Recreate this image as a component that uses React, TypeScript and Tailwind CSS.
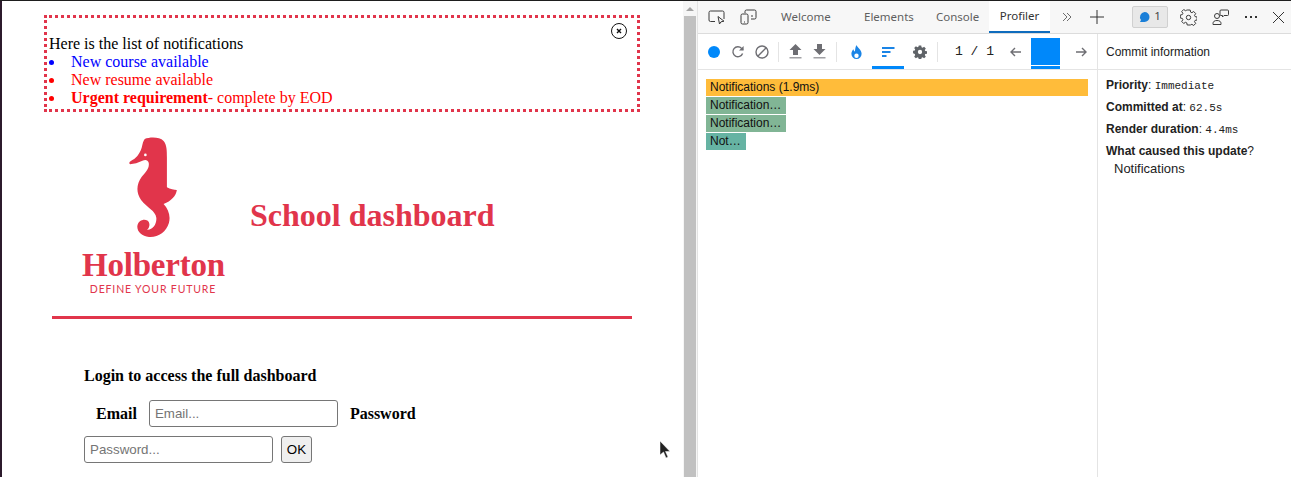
const Seahorse = () => (
  <svg width="50" height="101" viewBox="205 18 150 305" className="block">
    <path
      fill="#e1354b"
      d="M255 24 C270 18 300 17 312 30 C322 42 322 60 322 80 L322 170 C332 176 344 178 352 178 C350 195 335 212 312 220 C326 235 334 255 328 278 C320 305 295 322 268 320 C245 318 230 302 233 285 C236 270 252 264 263 270 C271 275 272 290 262 298 C278 300 292 282 290 262 C288 240 262 232 244 208 C228 186 230 160 246 138 C258 124 270 112 267 96 C264 86 256 86 248 90 C236 96 222 100 211 100 C207 98 208 93 212 91 C228 84 240 70 246 50 C249 38 250 30 255 24 Z"
    />
    <circle cx="257" cy="72" r="4" fill="#fff" />
  </svg>
)

const InspectIcon = () => (
  <svg width="17" height="15" viewBox="0 0 17 15" fill="none" stroke="#3b3b3b" strokeWidth="1">
    <path d="M7 11.5H2.5a1.5 1.5 0 0 1-1.5-1.5V2.5A1.5 1.5 0 0 1 2.5 1h12A1.5 1.5 0 0 1 16 2.5V9" />
    <path d="M10 6.5l1.5 7.5 1.5-2.2 3-.6z" />
  </svg>
)

const DeviceIcon = () => (
  <svg width="17" height="16" viewBox="0 0 17 16" fill="none" stroke="#3b3b3b" strokeWidth="1">
    <path d="M5 4V2.5A1.5 1.5 0 0 1 6.5 1h8A1.5 1.5 0 0 1 16 2.5v6a1.5 1.5 0 0 1-1.5 1.5H11" />
    <rect x="1" y="5" width="7" height="10" rx="1.5" />
    <path d="M4 13h1M11 7h2" />
  </svg>
)

const ReloadIcon = () => (
  <svg width="14" height="14" viewBox="0 0 14 14" fill="none" stroke="#6e6e73" strokeWidth="1.4">
    <path d="M11.6 8.5A5 5 0 1 1 10.6 3.4L12 4.8" />
    <path d="M12.6 1v4.6H8z" fill="#6e6e73" stroke="none" />
  </svg>
)

const BlockIcon = () => (
  <svg width="14" height="14" viewBox="0 0 14 14" fill="none" stroke="#6e6e73" strokeWidth="1.4">
    <circle cx="7" cy="7" r="6" />
    <path d="M2.8 11.2l8.4-8.4" />
  </svg>
)

const UploadIcon = ({ down }: { down?: boolean }) => (
  <svg width="13" height="15" viewBox="0 0 13 15" fill="#6e6e73">
    {down ? <path d="M4 0h5v5h3.5l-6 6-6-6H4z" /> : <path d="M6.500 0l6 6H9v5H4V6H.5z" />}
    <rect x="0.500" y="13" width="12" height="1.500" fill="#a0a0a4" />
  </svg>
)

const FlameIcon = () => (
  <svg width="11" height="14" viewBox="0 0 11 14" fill="#1a84e6">
    <path d="M5.600 0c.4 2.500 5 4.500 5 8.800A5.200 5.200 0 0 1 5.500 14 5.200 5.200 0 0 1 .4 8.800C.4 6.800 1.500 5.200 2.500 4.200c.1 1.200.6 2 1.400 2.400C4.300 4.500 4.200 2 5.600 0zM5.500 8.500a2.200 2.200 0 1 0 0 4.400 2.200 2.200 0 0 0 0-4.400z" />
  </svg>
)

const RankedIcon = () => (
  <svg width="13" height="10" viewBox="0 0 13 10" fill="#1a84e6">
    <rect width="12.500" height="2" />
    <rect y="4" width="8.500" height="2" />
    <rect y="8" width="4.500" height="2" />
  </svg>
)

const SolidGear = () => (
  <svg width="14" height="14" viewBox="-1 -1 26 26" fill="#5f6368">
    <path
      fillRule="evenodd"
      d="M9.700 0h4.600l.6 3.300 1.900.8 2.800-1.900 3.200 3.200-1.900 2.800.8 1.900 3.300.6v4.600l-3.300.6-.8 1.900 1.900 2.800-3.200 3.200-2.800-1.900-1.900.8-.6 3.300H9.700l-.6-3.300-1.900-.8-2.800 1.900-3.200-3.200 1.900-2.800-.8-1.900L-.9 14.300V9.700l3.200-.6.8-1.900-1.900-2.800 3.200-3.200 2.800 1.900 1.900-.8zM12 8a4 4 0 1 0 0 8 4 4 0 0 0 0-8z"
    />
  </svg>
)

const ArrowIcon = ({ right }: { right?: boolean }) => (
  <svg width="11" height="10" viewBox="0 0 11 10" fill="none" stroke="#6e6e73" strokeWidth="1.400">
    {right ? <path d="M0 5h10M6 1l4 4-4 4" /> : <path d="M11 5H1M5 1L1 5l4 4" />}
  </svg>
)

const ChatBadge = () => (
  <svg width="11" height="11" viewBox="0 0 11 11" fill="#1a7fd8">
    <path d="M5.500 0a5 5 0 0 1 0 10H1l1-2A5 5 0 0 1 5.500 0z" />
  </svg>
)

const OutlineGear = () => (
  <svg width="17" height="17" viewBox="0 0 17 17" fill="none" stroke="#3b3b3b" strokeWidth="1">
    <path d="M7 1h3l.4 2.100 1.300.6 1.800-1.200 2 2.100-1.200 1.700.6 1.300 2 .4v3l-2 .4-.6 1.300 1.200 1.700-2 2.100-1.800-1.200-1.300.6L10 16H7l-.4-2.100-1.300-.6-1.800 1.200-2-2.100 1.200-1.700-.6-1.300-2-.4V6l2-.4.6-1.300-1.200-1.700 2-2.100 1.800 1.200 1.300-.6z" transform="translate(.2 0)" />
    <circle cx="8.500" cy="8.500" r="2.200" />
  </svg>
)

const FeedbackIcon = () => (
  <svg width="17" height="16" viewBox="0 0 17 16" fill="none" stroke="#3b3b3b" strokeWidth="1">
    <circle cx="5" cy="7" r="2.500" />
    <path d="M1 15.500v-1c0-2 1.500-3 4-3s4 1 4 3v1z" />
    <path d="M9 1h6.500A1 1 0 0 1 16.500 2v3.500a1 1 0 0 1-1 1H12l-1.500 1.500V6.500H9A1 1 0 0 1 8 5.500V2a1 1 0 0 1 1-1z" />
  </svg>
)

const FlameBar = ({ label, color, width }: { label: string; color: string; width: string }) => (
  <div className={`h-[17px] ${width} ${color} overflow-hidden whitespace-nowrap pl-1 text-[12px] leading-[17px] text-[#111]`}>
    {label}
  </div>
)

const Bullet = () => (
  <span className="flex w-[22px] shrink-0 items-center">
    <i className="h-[5px] w-[5px] rounded-full bg-current"></i>
  </span>
)

const App = () => {
  return (
    <div className="relative flex h-[477px] w-[1291px] flex-col overflow-hidden bg-white">
      <div className="h-[1px] w-full bg-[#1e1e1e]"></div>
      <div className="flex min-h-0 flex-1">
        <div className="w-[2px] bg-[#2c1a2c]"></div>

        {/* page */}
        <div className="w-[681px] shrink-0 pl-[42px] pt-[14px] font-['Liberation_Serif',serif] text-[16px] leading-[18px]">
          <div className="relative h-[97px] w-[596px] border-[3px] border-dotted border-[#e1354b] pl-[2px] pt-[17px]">
            <button className="absolute right-[10px] top-[5px] flex h-[16px] w-[16px] items-center justify-center rounded-full border-[1.500px] border-[#111]">
              <svg width="6" height="6" viewBox="0 0 6 6" stroke="#111" strokeWidth="1.400">
                <path d="M1 1l4 4M5 1L1 5" />
              </svg>
            </button>
            <p>Here is the list of notifications</p>
            <ul className="text-[#f00]">
              <li className="flex text-[#00f]">
                <Bullet />New course available
              </li>
              <li className="flex">
                <Bullet />New resume available
              </li>
              <li className="flex">
                <Bullet />
                <span><b>Urgent requirement</b>- complete by EOD</span>
              </li>
            </ul>
          </div>

          <div className="ml-[8px] flex h-[207px] w-[580px] items-center border-b-[3px] border-[#e1354b]">
            <div className="flex w-[198px] flex-col items-center pt-[4px]">
              <div className="ml-[4px]"><Seahorse /></div>
              <div className="ml-[5px] mt-[9px] font-['Liberation_Serif',serif] text-[33px] font-bold leading-[36px] tracking-[-0.2px] text-[#e1354b]">Holberton</div>
              <div className="ml-[4px] mt-[-1px] font-['Lato',sans-serif] text-[10.500px] leading-[14px] tracking-[0.85px] text-[#e1354b]">DEFINE YOUR FUTURE</div>
            </div>
            <h1 className="mt-[1px] text-[32px] font-bold leading-[36px] text-[#e1354b]">School dashboard</h1>
          </div>

          <div className="pl-[40px] pt-[48px]">
            <p className="font-bold">Login to access the full dashboard</p>
            <div className="mt-[15px] flex h-[27px] items-center">
              <label className="ml-[12px] font-bold">Email</label>
              <input
                placeholder="Email..."
                className="ml-[12px] h-[27px] w-[189px] rounded-[3px] border border-[#767676] px-[5px] font-['Liberation_Sans',sans-serif] text-[13.333px] placeholder:text-[#757575]"
              />
              <label className="ml-[12px] font-bold">Password</label>
            </div>
            <div className="mt-[9px] flex h-[27px] items-center">
              <input
                placeholder="Password..."
                className="h-[27px] w-[189px] rounded-[3px] border border-[#767676] px-[5px] font-['Liberation_Sans',sans-serif] text-[13.333px] placeholder:text-[#757575]"
              />
              <button className="ml-[8px] h-[27px] w-[31px] rounded-[3px] border border-[#767676] bg-[#efefef] font-['Liberation_Sans',sans-serif] text-[13.333px] text-black">OK</button>
            </div>
          </div>
        </div>

        {/* scrollbar */}
        <div className="flex w-[14px] shrink-0 flex-col items-center bg-[#f6f6f6] pt-[6px]">
          <div className="h-0 w-0 border-x-[4px] border-b-[4px] border-x-transparent border-b-[#a3a3a3]"></div>
          <div className="mt-[5px] w-[12px] flex-1 bg-[#c1c1c1]"></div>
        </div>

        {/* devtools */}
        <div className="flex min-w-0 flex-1 flex-col border-l border-[#e3e3e3] font-['Liberation_Sans',sans-serif]">
          <div className="flex h-[33px] items-center border-b border-[#dcdcdc] bg-[#f7f7f7] font-['Noto_Sans',sans-serif] text-[11.500px] text-[#5f5f5f]">
            <div className="ml-[10px]"><InspectIcon /></div>
            <div className="ml-[15px]"><DeviceIcon /></div>
            <span className="ml-[24px] w-[83px]">Welcome</span>
            <span className="w-[72px]">Elements</span>
            <span className="w-[53px]">Console</span>
            <div className="flex h-[32px] w-[61px] items-center justify-center border-b-[2px] border-[#0f6cbd] bg-white text-[#333]">Profiler</div>
            <svg className="ml-[12px]" width="10" height="10" viewBox="0 0 10 10" fill="none" stroke="#6e6e6e">
              <path d="M1 1l4 4-4 4M5 1l4 4-4 4" />
            </svg>
            <svg className="ml-[17px]" width="16" height="16" viewBox="0 0 16 16" stroke="#333">
              <path d="M8 1v14M1 8h14" />
            </svg>
            <div className="ml-[27px] flex h-[22px] w-[36px] items-center justify-center gap-[4px] rounded-[2px] border border-[#d0d0d0] bg-[#e8e8e8] text-[#444]">
              <ChatBadge />
              <span className="mt-[-3px]">1</span>
            </div>
            <div className="ml-[12px]"><OutlineGear /></div>
            <div className="ml-[15px]"><FeedbackIcon /></div>
            <span className="ml-[16px] flex gap-[3px]">
              <i className="h-[2px] w-[2px] bg-[#333]"></i>
              <i className="h-[2px] w-[2px] bg-[#333]"></i>
              <i className="h-[2px] w-[2px] bg-[#333]"></i>
            </span>
            <svg className="ml-[15px]" width="13" height="13" viewBox="0 0 13 13" stroke="#333">
              <path d="M1 1l11 11M12 1L1 12" />
            </svg>
          </div>

          <div className="flex min-h-0 flex-1">
            <div className="w-[399px] shrink-0">
              <div className="flex h-[36px] items-center border-b border-[#e4e4e4]">
                <div className="ml-[10px] h-[12px] w-[12px] rounded-full bg-[#0088fa]"></div>
                <div className="ml-[11px]"><ReloadIcon /></div>
                <div className="ml-[10px]"><BlockIcon /></div>
                <div className="ml-[9px] h-[20px] w-[1px] bg-[#e4e4e4]"></div>
                <div className="ml-[10px]"><UploadIcon /></div>
                <div className="ml-[11px]"><UploadIcon down /></div>
                <div className="ml-[10px] h-[20px] w-[1px] bg-[#e4e4e4]"></div>
                <div className="ml-[14px]"><FlameIcon /></div>
                <div className="relative ml-[20px] flex h-[35px] items-center">
                  <RankedIcon />
                  <div className="absolute bottom-0 left-[-10px] h-[3px] w-[32px] bg-[#0088fa]"></div>
                </div>
                <div className="ml-[18px]"><SolidGear /></div>
                <div className="ml-[10px] h-[20px] w-[1px] bg-[#e4e4e4]"></div>
                <span className="ml-[17px] whitespace-pre font-['Liberation_Mono',monospace] text-[13px] text-[#222]">1 / 1</span>
                <div className="ml-[16px]"><ArrowIcon /></div>
                <div className="ml-[10px] flex h-[35px] w-[29px] flex-col self-start pt-[4px]">
                  <div className="h-[27px] bg-[#0088fa]"></div>
                  <div className="mt-[1px] h-[3px] bg-[#0088fa]"></div>
                </div>
                <div className="ml-[16px]"><ArrowIcon right /></div>
              </div>
              <div className="flex flex-col gap-[1px] pl-[8px] pt-[9px]">
                <FlameBar label="Notifications (1.9ms)" color="bg-[#ffbc3a]" width="w-[382px]" />
                <FlameBar label="Notification…" color="bg-[#81b595]" width="w-[80px]" />
                <FlameBar label="Notification…" color="bg-[#81b595]" width="w-[80px]" />
                <FlameBar label="Not…" color="bg-[#66b3a3]" width="w-[40px]" />
              </div>
            </div>

            <div className="flex-1 border-l border-[#e4e4e4] text-[12px] text-[#222]">
              <div className="flex h-[36px] items-center border-b border-[#e4e4e4] pl-[8px]">Commit information</div>
              <div className="flex flex-col gap-[8px] pl-[8px] pt-[8px] leading-[14px]">
                <div className="h-[14px]"><b>Priority</b>: <span className="font-['Liberation_Mono',monospace] text-[11px]">Immediate</span></div>
                <div className="h-[14px]"><b>Committed at</b>: <span className="font-['Liberation_Mono',monospace] text-[11px]">62.5s</span></div>
                <div className="h-[14px]"><b>Render duration</b>: <span className="font-['Liberation_Mono',monospace] text-[11px]">4.4ms</span></div>
                <div className="h-[14px]"><b>What caused this update</b>?</div>
              </div>
              <div className="pl-[16px] pt-[3px] text-[13px] leading-[16px]">Notifications</div>
            </div>
          </div>
        </div>
      </div>

      {/* mouse cursor */}
      <svg className="absolute left-[659px] top-[440px]" width="13" height="20" viewBox="0 0 13 20">
        <path d="M1 1v14l3.500-3 2.500 6 2-1-2.500-5.500H11z" fill="#222" stroke="#fff" strokeWidth="0.500" />
      </svg>
    </div>
  )
}

export default App
